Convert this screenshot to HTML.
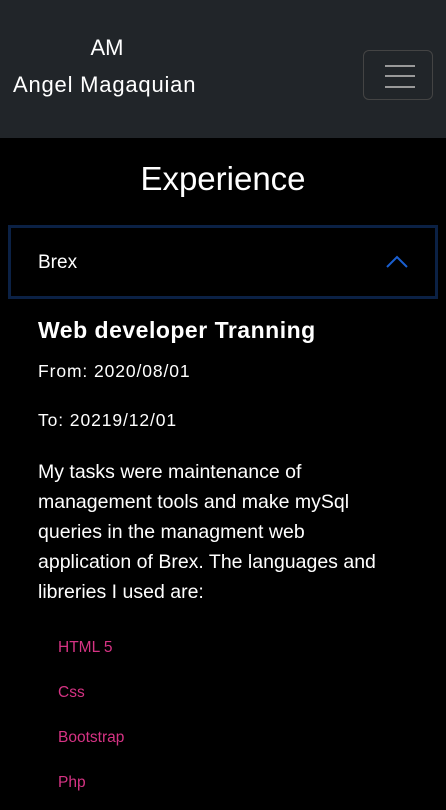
<!DOCTYPE html>
<html><head><meta charset="utf-8"><style>
*{margin:0;padding:0;box-sizing:border-box}
body{width:446px;height:810px;overflow:hidden;background:#000;font-family:"Liberation Sans",sans-serif;color:#fff}
.hdr{position:absolute;left:0;top:0;width:446px;height:138px;background:#212529}
.am{position:absolute;left:0;width:214px;text-align:center;top:35px;font-size:22px}
.nm{position:absolute;left:13px;top:72px;font-size:22px;letter-spacing:0.8px;white-space:nowrap}
.tog{position:absolute;left:363px;top:50px;width:70px;height:50px;border:1px solid #444;border-radius:6px}
.tog i{position:absolute;left:21px;width:30px;height:2px;background:#999}
h1{position:absolute;top:160px;width:446px;text-align:center;font-weight:normal;font-size:33px}
.acc{position:absolute;left:8px;top:225px;width:430px;height:74px;border:3px solid #0b2145}
.acc span{position:absolute;left:27px;top:24px;font-size:19px}
.acc svg{position:absolute;left:374px;top:27px}
.t{position:absolute;left:38px;font-size:17.5px;letter-spacing:0.9px;white-space:nowrap}
h2{position:absolute;left:38px;top:317px;font-size:23px;letter-spacing:0.5px;white-space:nowrap}
.p{position:absolute;left:38px;top:457px;width:400px;font-size:19.5px;line-height:30px;white-space:nowrap}
.li{position:absolute;left:58px;color:#d63384;font-size:15.5px}
</style></head><body>
<div class="hdr"><div class="am">AM</div><div class="nm">Angel Magaquian</div>
<div class="tog"><i style="top:14px"></i><i style="top:24px"></i><i style="top:35px"></i></div></div>
<h1>Experience</h1>
<div class="acc"><span>Brex</span><svg width="24" height="14" viewBox="0 0 24 14"><path d="M2 12L12 2L22 12" fill="none" stroke="#1a5fd0" stroke-width="2"/></svg></div>
<h2>Web developer Tranning</h2>
<div class="t" style="top:361px">From: 2020/08/01</div>
<div class="t" style="top:410px">To: 20219/12/01</div>
<div class="p">My tasks were maintenance of<br>management tools and make mySql<br>queries in the managment web<br>application of Brex. The languages and<br>libreries I used are:</div>
<div class="li" style="top:639px">HTML 5</div>
<div class="li" style="top:684px">Css</div>
<div class="li" style="top:729px">Bootstrap</div>
<div class="li" style="top:774px">Php</div>
</body></html>
